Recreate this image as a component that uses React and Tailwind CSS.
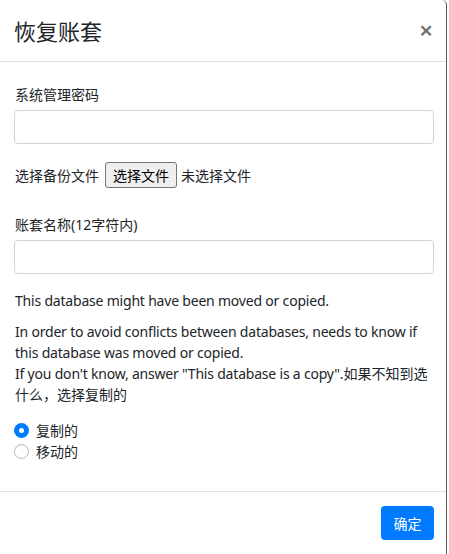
export default function App() {
  const font = { fontFamily: '"Noto Sans", "Noto Sans CJK SC", sans-serif' };
  return (
    <div className="w-[449px] h-[554px] bg-white overflow-hidden" style={font}>
      <div className="w-[447px] h-[554px] border-r border-[#5a5a5a] rounded-tr-[5px] bg-white flex flex-col text-[#212529]">
        <div className="h-[62px] shrink-0 border-b border-[#dee2e6] flex items-center justify-between pl-[14px] pr-[13px]">
          <div className="text-[22px] leading-none">恢复账套</div>
          <div className="text-[24px] font-semibold leading-none text-[#6e6e6e] pb-[2px]">×</div>
        </div>
        <div className="flex-1 pl-[15px] pr-[12px] pt-[22px] text-[14px] leading-[21px]">
          <div>系统管理密码</div>
          <div className="-ml-[1px] mt-[5px] h-[34px] border border-[#ced4da] rounded-[4px]"></div>
          <div className="mt-[18px] flex items-center h-[26px]">
            <span>选择备份文件</span>
            <span className="ml-[6px] h-[26px] px-[7px] flex items-center bg-[#efefef] border border-[#767676] rounded-[3px] text-black">选择文件</span>
            <span className="ml-[4px]">未选择文件</span>
          </div>
          <div className="mt-[26px]">账套名称(12字符内)</div>
          <div className="-ml-[1px] mt-[5px] h-[34px] border border-[#ced4da] rounded-[4px]"></div>
          <div className="mt-[16px] whitespace-nowrap tracking-[-0.2px]">This database might have been moved or copied.</div>
          <div className="mt-[10px] whitespace-nowrap tracking-[-0.2px]">
            In order to avoid conflicts between databases, needs to know if<br />
            this database was moved or copied.<br />
            If you don't know, answer "This database is a copy".<span className="tracking-normal">如果不知到选</span><br />
            <span className="tracking-normal">什么，选择复制的</span>
          </div>
          <div className="-ml-[1px] mt-[15px] flex flex-col">
            <div className="flex items-center h-[21px]">
              <span className="w-[15px] h-[15px] rounded-full bg-[#007bff] flex items-center justify-center">
                <span className="w-[5px] h-[5px] rounded-full bg-white"></span>
              </span>
              <span className="ml-[7px]">复制的</span>
            </div>
            <div className="flex items-center h-[21px]">
              <span className="w-[15px] h-[15px] rounded-full border border-[#adb5bd] bg-white"></span>
              <span className="ml-[7px]">移动的</span>
            </div>
          </div>
        </div>
        <div className="h-[63px] shrink-0 border-t border-[#dee2e6] flex items-start justify-end pr-[12px] pt-[14px]">
          <div className="w-[53px] h-[34px] bg-[#007bff] rounded-[4px] text-white text-[14px] flex items-center justify-center">确定</div>
        </div>
      </div>
    </div>
  );
}
